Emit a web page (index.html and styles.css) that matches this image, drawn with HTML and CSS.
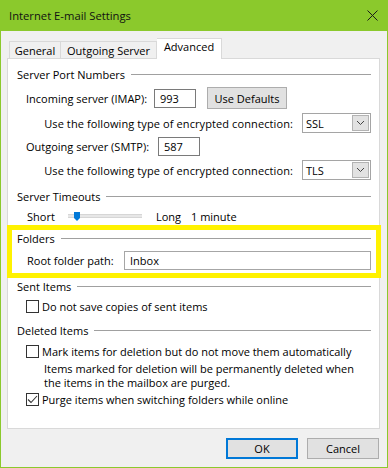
FILE: index.html
```html
<!DOCTYPE html>
<html lang="en">
  <head>
    <meta charset="UTF-8" />
    <title>Internet E-mail Settings</title>
    <link rel="stylesheet" href="styles.css">
  </head>
  <body>
    <div class="window">
      <div class="titlebar">
        <span class="title">Internet E-mail Settings</span>
        <svg class="close" width="11" height="11" viewBox="0 0 11 11">
          <path d="M0.5 0.5 L10.5 10.5 M10.5 0.5 L0.5 10.5" stroke="#1a1a1a" stroke-width="1" fill="none" />
        </svg>
      </div>

      <div class="dialog">
        <div class="tabs">
          <div class="tab tab-general">General</div>
          <div class="tab tab-outgoing">Outgoing Server</div>
          <div class="tab tab-advanced active">Advanced</div>
        </div>

        <div class="panel">
          <div class="group-title">Server Port Numbers</div>

          <div class="row row-imap">
            <span class="label label-imap">Incoming server (IMAP):</span>
            <div class="textbox port">993</div>
            <button class="btn defaults">Use Defaults</button>
          </div>

          <div class="row row-enc">
            <span class="label">Use the following type of encrypted connection:</span>
            <div class="combo">
              <span class="combo-value">SSL</span>
              <span class="combo-arrow">
                <svg width="9" height="6" viewBox="0 0 9 6"><path d="M1 1 L4.5 4.5 L8 1" stroke="#444" fill="none" /></svg>
              </span>
            </div>
          </div>

          <div class="row row-smtp">
            <span class="label label-smtp">Outgoing server (SMTP):</span>
            <div class="textbox port">587</div>
          </div>

          <div class="row row-enc">
            <span class="label">Use the following type of encrypted connection:</span>
            <div class="combo">
              <span class="combo-value">TLS</span>
              <span class="combo-arrow">
                <svg width="9" height="6" viewBox="0 0 9 6"><path d="M1 1 L4.5 4.5 L8 1" stroke="#444" fill="none" /></svg>
              </span>
            </div>
          </div>

          <div class="group-title spaced">Server Timeouts</div>

          <div class="row row-timeout">
            <span class="label label-short">Short</span>
            <div class="slider">
              <div class="slider-track"></div>
              <svg class="slider-thumb" width="6" height="9" viewBox="0 0 6 9"><path d="M0 0 H6 V6 L3 9 L0 6 Z" fill="#0078d7" /></svg>
            </div>
            <span class="label label-long">Long</span>
            <span class="label">1 minute</span>
          </div>

          <div class="highlight">
            <div class="group-title">Folders</div>
            <div class="row row-root">
              <span class="label label-root">Root folder path:</span>
              <div class="textbox root">Inbox</div>
            </div>
          </div>

          <div class="group-title">Sent Items</div>
          <div class="row row-check">
            <span class="checkbox"></span>
            <span class="label">Do not save copies of sent items</span>
          </div>

          <div class="group-title spaced">Deleted Items</div>
          <div class="row row-check row-mark">
            <span class="checkbox"></span>
            <span class="label">Mark items for deletion but do not move them automatically</span>
          </div>
          <p class="note">Items marked for deletion will be permanently deleted when<br>the items in the mailbox are purged.</p>
          <div class="row row-check row-purge">
            <span class="checkbox">
              <svg width="11" height="11" viewBox="0 0 11 11"><path d="M1 5.5 L4 8.5 L10 2" stroke="#333" stroke-width="1.1" fill="none" /></svg>
            </span>
            <span class="label">Purge items when switching folders while online</span>
          </div>
        </div>

        <div class="footer">
          <button class="btn ok">OK</button>
          <button class="btn cancel">Cancel</button>
        </div>
      </div>
    </div>
  </body>
</html>
```
FILE: styles.css
```css
body {
  margin: 0;
  font-family: "Open Sans", "Noto Sans", sans-serif;
  font-size: 11px;
  color: #000;
}

.window {
  width: 388px;
  height: 468px;
  display: flex;
  flex-direction: column;
}

.titlebar {
  height: 31px;
  flex: none;
  background-color: #8bc92c;
  display: flex;
  align-items: center;
  justify-content: space-between;
  padding: 0 10px 0 9px;
}

.title {
  font-size: 11.25px;
  color: #111;
}

.close {
  display: block;
}

.dialog {
  flex: 1;
  background-color: #f0f0f0;
  border: 1px solid #8bc92c;
  border-top: none;
  padding: 7px 0 0 0;
}

/* tabs */

.tabs {
  display: flex;
  align-items: flex-end;
  padding-left: 8px;
  height: 20px;
}

.tab {
  height: 17px;
  box-sizing: border-box;
  border: 1px solid #d9d9d9;
  border-bottom: none;
  background-color: #f0f0f0;
  text-align: center;
  line-height: 17px;
}

.tab-general {
  width: 52px;
}

.tab-outgoing {
  width: 96px;
  border-left: none;
}

.tab-advanced {
  width: 65px;
  border-left: none;
}

.tab.active {
  height: 21px;
  margin-bottom: -1px;
  background-color: #fff;
  line-height: 16px;
  position: relative;
  z-index: 1;
}

.panel {
  box-sizing: border-box;
  height: 371px;
  width: 373px;
  margin-left: 6px;
  background-color: #fff;
  border: 1px solid #d9d9d9;
  padding: 7px 8px 0 9px;
}

/* group headers with rule */

.group-title {
  display: flex;
  align-items: center;
  gap: 6px;
  height: 16px;
  white-space: nowrap;
}

.group-title::after {
  content: "";
  flex: 1;
  height: 1px;
  background-color: #a0a0a0;
}

.group-title.spaced {
  margin-top: 7px;
}

.row {
  display: flex;
  align-items: center;
  padding-left: 9px;
  white-space: nowrap;
}

.row-imap {
  height: 24px;
  margin-top: 4px;
}

.label-imap {
  width: 128px;
}

.row-smtp {
  height: 21px;
  margin-top: 2px;
}

.label-smtp {
  width: 132px;
}

.row-enc {
  height: 22px;
  margin-top: 2px;
  justify-content: flex-end;
  gap: 9px;
}

.row-enc .label {
  letter-spacing: 0.1px;
}

.textbox {
  box-sizing: border-box;
  height: 19px;
  border: 1px solid #7a7a7a;
  background-color: #fff;
  padding-left: 5px;
  line-height: 17px;
}

.port {
  width: 42px;
}

.root {
  flex: 1;
  border-color: #a6a6a6;
}

.btn {
  font-family: inherit;
  font-size: 11px;
  color: #000;
  background-color: #e1e1e1;
  border: 1px solid #adadad;
  padding: 0;
  box-sizing: border-box;
}

.defaults {
  width: 80px;
  height: 22px;
  margin-left: 11px;
}

.combo {
  box-sizing: border-box;
  width: 69px;
  height: 20px;
  border: 1px solid #a5a5a5;
  display: flex;
  align-items: center;
  justify-content: space-between;
  padding: 1px;
}

.combo-value {
  padding-left: 2px;
}

.combo-arrow {
  box-sizing: border-box;
  width: 17px;
  height: 16px;
  background-color: #e2e2e2;
  border: 1px solid #b3b3b3;
  display: flex;
  align-items: center;
  justify-content: center;
}

.combo-arrow svg {
  display: block;
}

/* timeout slider */

.row-timeout {
  height: 18px;
  margin-top: 3px;
  padding-left: 10px;
}

.label-short {
  width: 41px;
}

.slider {
  position: relative;
  width: 74px;
  height: 18px;
}

.slider-track {
  position: absolute;
  left: 0;
  right: 0;
  top: 7px;
  height: 2px;
  background-color: #e7e7e7;
  border-top: 1px solid #d6d6d6;
  border-bottom: 1px solid #d6d6d6;
}

.slider-thumb {
  position: absolute;
  left: 6px;
  top: 5px;
}

.label-long {
  margin-left: 14px;
  width: 35px;
}

/* highlighted folders block */

.highlight {
  border: 5px solid #fff200;
  margin: 0 -10px;
  padding: 0 5px 2px 5px;
}

.row-root {
  height: 22px;
  margin-top: 3px;
  padding-left: 10px;
}

.label-root {
  width: 97px;
}

/* checkboxes */

.row-check {
  height: 17px;
  margin-top: 4px;
}

.row-mark {
  margin-top: 5px;
}

.row-purge {
  margin-top: 1px;
}

.checkbox {
  box-sizing: border-box;
  width: 13px;
  height: 13px;
  border: 1px solid #333;
  background-color: #fff;
  margin-right: 3px;
  display: flex;
  align-items: center;
  justify-content: center;
}

.checkbox svg {
  display: block;
}

.note {
  margin: 2px 0 0 27px;
  line-height: 14px;
}

/* dialog buttons */

.footer {
  display: flex;
  justify-content: flex-end;
  gap: 9px;
  padding-right: 8px;
  margin-top: 9px;
}

.ok,
.cancel {
  width: 72px;
  height: 21px;
}

.ok {
  border: 2px solid #0078d7;
}
```
